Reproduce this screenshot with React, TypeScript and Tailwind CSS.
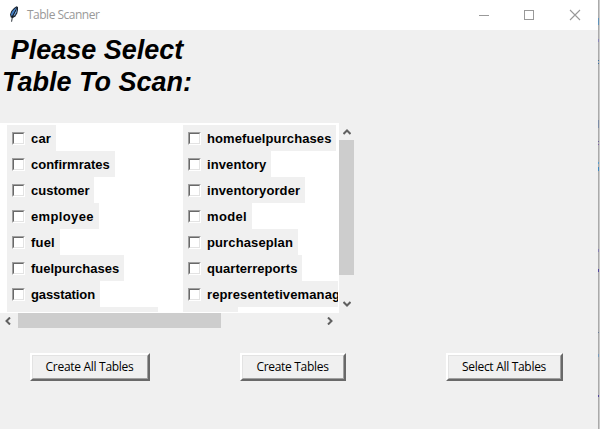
import React from "react";

type Item = { name: string; box: string; text?: string };

const left: Item[] = [
  { name: "car", box: "w-[49px]", text: "tracking-[0.2px]" },
  { name: "confirmrates", box: "w-[108px]" },
  { name: "customer", box: "w-[87px]" },
  { name: "employee", box: "w-[92px]", text: "tracking-[0.36px]" },
  { name: "fuel", box: "w-[53px]", text: "tracking-[0.2px]" },
  { name: "fuelpurchases", box: "w-[117px]" },
  { name: "gasstation", box: "w-[93px]", text: "tracking-[-0.1px]" },
  { name: "", box: "w-[151px]" },
];

const right: Item[] = [
  { name: "homefuelpurchases", box: "w-[153px]", text: "tracking-[0.1px]" },
  { name: "inventory", box: "w-[88px]", text: "tracking-[0.1px]" },
  { name: "inventoryorder", box: "w-[122px]", text: "tracking-[0.1px]" },
  { name: "model", box: "w-[69px]", text: "tracking-[0.36px]" },
  { name: "purchaseplan", box: "w-[115px]", text: "tracking-[0.12px]" },
  { name: "quarterreports", box: "w-[119px]", text: "tracking-[0.06px]" },
  { name: "representetivemanager", box: "w-[190px]", text: "tracking-[0.12px]" },
  { name: "", box: "w-[55px]" },
];

function Column({ items }: { items: Item[] }) {
  return (
    <div className="w-[176px] shrink-0">
      {items.map((item, i) => (
        <div key={i} className={`flex h-[26px] items-center bg-[#f0f0f0] pl-[5px] ${item.box}`}>
          {item.name && (
            <>
              <span className="mt-px size-[13px] shrink-0 border border-t-[#a0a0a0] border-r-white border-b-white border-l-[#a0a0a0]">
                <span className="block size-[11px] border border-t-[#696969] border-r-[#e3e3e3] border-b-[#e3e3e3] border-l-[#696969] bg-white" />
              </span>
              <span className={`ml-[6px] pt-[2px] text-[13px] leading-[26px] font-bold whitespace-nowrap ${item.text ?? ""}`}>{item.name}</span>
            </>
          )}
        </div>
      ))}
    </div>
  );
}

function Chevron({ points }: { points: string }) {
  return (
    <svg className="size-[8px] shrink-0" viewBox="0 0 8 8" fill="none" stroke="#606060" strokeWidth="2">
      <polyline points={points} />
    </svg>
  );
}

function Button({ label, className }: { label: string; className: string }) {
  return (
    <button
      className={`h-[28px] border-2 border-t-white border-r-[#696969] border-b-[#696969] border-l-white bg-[#f0f0f0] ${className}`}
    >
      <span className="flex h-full items-center justify-center border border-t-[#e3e3e3] border-r-[#a0a0a0] border-b-[#a0a0a0] border-l-[#e3e3e3] pr-px font-['Open_Sans',sans-serif] text-[12px] tracking-[-0.3px] whitespace-nowrap">
        {label}
      </span>
    </button>
  );
}

function Feather() {
  return (
    <svg className="h-[16px] w-[10px]" viewBox="0 0 10 16">
      <path d="M7.5 0.3 L9 1 L9 4 L8.2 7.5 L6.5 10.2 L4 12 L1.8 11.5 L1 8.5 L2.3 5 L5 2 Z" fill="#1b2530" />
      <path d="M7.5 1.2 L6 5.5 L3.5 10 L2.3 9.8 L2 8 L3.5 5 Z" fill="#4682c8" />
      <path d="M8 2.5 L7.6 6 L6 9 L4.3 10.3 L6 6.5 Z" fill="#78aee8" />
      <path d="M6.8 4 L3.5 10 L2.6 15.7" fill="none" stroke="#111820" strokeWidth="0.9" />
    </svg>
  );
}

export default function App() {
  return (
    <div className="flex h-[429px] w-[600px] overflow-hidden bg-[#f0f0f0] font-['Liberation_Sans',Arial,sans-serif] text-black">
      <main className="w-[598px] shrink-0">
        <header className="flex h-[30px] items-center bg-white pl-[9px] text-[#999999]">
          <div className="mb-[3px]"><Feather /></div>
          <h1 className="ml-[8px] font-['Open_Sans',sans-serif] text-[12px] tracking-[-0.5px] whitespace-nowrap">Table Scanner</h1>
          <svg className="mr-[17px] ml-auto h-[12px] w-[102px]" viewBox="0 0 102 12" fill="none" stroke="#999999">
            <path d="M0 6.5H10 M45.5 1.5H54.5V10.5H45.5Z" shapeRendering="crispEdges" />
            <path d="M91 1L101 11M101 1L91 11" strokeWidth="1.1" />
          </svg>
        </header>
        <h2 className="h-[93px] w-[194px] pt-[4px] text-center text-[27px] leading-[32px] font-bold italic">
          <span className="block whitespace-nowrap">Please Select</span>
          <span className="block whitespace-nowrap">Table To Scan:</span>
        </h2>
        <section className="w-[354px]">
          <div className="flex h-[190px]">
            <div className="w-[339px] overflow-hidden border-r border-b border-white bg-white pt-[2px] pl-[7px]">
              <div className="flex">
                <Column items={left} />
                <Column items={right} />
              </div>
            </div>
            <div className="flex w-[15px] flex-col items-center">
              <div className="flex h-[17px] items-center"><Chevron points="0.5,6 4,2.5 7.5,6" /></div>
              <div className="h-[135px] w-[15px] bg-[#cdcdcd]" />
              <div className="mt-auto flex h-[19px] items-center"><Chevron points="0.5,2 4,5.5 7.5,2" /></div>
            </div>
          </div>
          <div className="flex h-[15px] w-[339px] items-center">
            <div className="flex w-[18px] justify-center pr-[2px]"><Chevron points="6,0.5 2.5,4 6,7.5" /></div>
            <div className="h-[15px] w-[203px] bg-[#cdcdcd]" />
            <div className="mr-[5px] ml-auto"><Chevron points="2,0.5 5.5,4 2,7.5" /></div>
          </div>
        </section>
        <div className="mt-[25px] flex pl-[30px]">
          <Button label="Create All Tables" className="w-[120px]" />
          <Button label="Create Tables" className="ml-[90px] w-[106px]" />
          <Button label="Select All Tables" className="ml-[100px] w-[117px]" />
        </div>
      </main>
      <div className="flex h-full w-px flex-col bg-[#aaaaaa]">
        <div className="mt-[18px] h-[7px] bg-[#5f93bb]" />
        <div className="mt-[14px] h-[3px] bg-[#8b86b8]" />
        <div className="mt-[18px] h-px bg-[#3672a8]" />
        <div className="mt-[2px] h-px bg-[#3672a8]" />
        <div className="mt-[56px] h-[8px] bg-[#7d8ca5]" />
        <div className="mt-[13px] h-px bg-[#6a6099]" />
        <div className="mt-[2px] h-px bg-[#8060a5]" />
        <div className="mt-[17px] h-[2px] bg-[#5b9dca]" />
        <div className="mt-[3px] h-[4px] bg-[#3f8ac2]" />
        <div className="mt-[78px] h-[3px] bg-[#8880b0]" />
        <div className="mt-[17px] h-[3px] bg-[#5548a0]" />
        <div className="mt-[60px] h-px bg-[#687b98]" />
        <div className="mt-[21px] h-[3px] bg-[#7a9cbd]" />
        <div className="mt-[38px] h-[2px] bg-[#5548a0]" />
      </div>
      <div className="h-full w-px bg-[#cccccc]" />
    </div>
  );
}
